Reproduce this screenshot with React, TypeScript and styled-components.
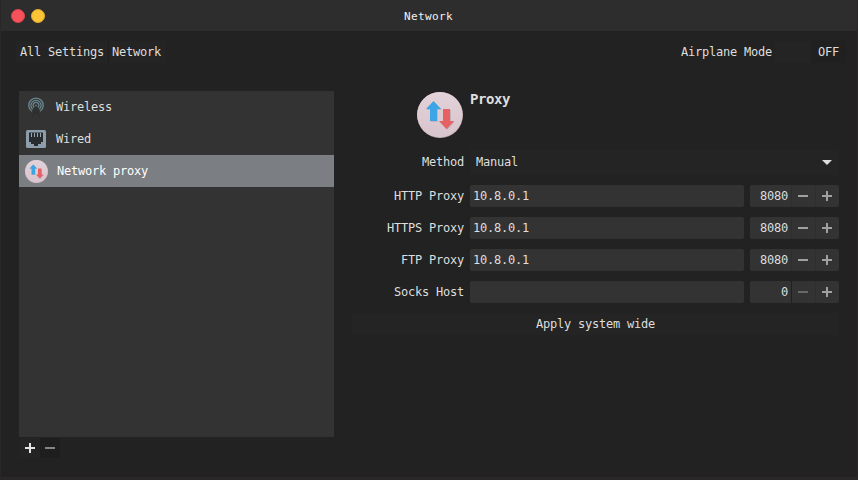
import React from "react";
import styled, { createGlobalStyle } from "styled-components";

const GlobalStyle = createGlobalStyle`
  *, *::before, *::after { box-sizing: border-box; }
  body { margin: 0; background: #292526; }
`;

const Window = styled.div`
  width: 858px;
  height: 480px;
  display: flex;
  flex-direction: column;
  border: solid #292728;
  border-width: 0 1px 3px;
  background: #222222;
  color: #dedede;
  font: 12px/16px "DejaVu Sans Mono", monospace;
  letter-spacing: -0.224px;
  white-space: pre;
  overflow: hidden;
`;

const TitleBar = styled.header`
  height: 31px;
  flex: none;
  display: grid;
  grid-template-columns: 1fr auto 1fr;
  align-items: center;
  padding: 0 11px 0 10px;
  background: #2d2d2d;
`;

const Lights = styled.div`
  display: flex;
  gap: 6px;
  padding-top: 1px;
`;

const Light = styled.span<{ $color: string; $edge: string }>`
  width: 14px;
  height: 14px;
  border-radius: 50%;
  background: ${(p) => p.$color};
  border: 1px solid ${(p) => p.$edge};
`;

const Title = styled.h1`
  margin: 0;
  color: #f2f2f2;
  font-size: 11px;
  font-weight: 400;
  letter-spacing: 0.378px;
  padding-top: 2px;
`;

const Toolbar = styled.nav`
  display: flex;
  align-items: center;
  height: 22px;
  margin: 10px 10px 0 15px;
`;

const Crumb = styled.span<{ $last?: boolean }>`
  height: 22px;
  line-height: 22px;
  padding: 0 4px 0 ${(p) => (p.$last ? "3px" : "4px")};
  background: #242424;
  border-left: ${(p) => (p.$last ? "1px solid #1e1e1e" : "none")};
`;

const Airplane = styled.span`
  margin-left: auto;
  padding-right: 3px;
`;

const Toggle = styled.span`
  display: flex;
  width: 72px;
  height: 22px;
  line-height: 22px;
  background: #202020;
`;

const ToggleKnob = styled.span`
  width: 36px;
  margin-right: 7px;
  background: #242424;
`;

const ToggleSection = styled.span`
  flex: 1;
`;

const Content = styled.main`
  display: flex;
  gap: 18px;
  padding: 28px 18px 0;
`;

const Sidebar = styled.aside`
  width: 315px;
`;

const DeviceList = styled.div`
  height: 346px;
  background: #333333;
`;

const Device = styled.div<{ $selected?: boolean }>`
  height: 32px;
  display: flex;
  align-items: center;
  padding-left: 6px;
  gap: 9px;
  background: ${(p) => (p.$selected ? "#7b7e82" : "transparent")};
  color: ${(p) => (p.$selected ? "#ffffff" : "#dedede")};
  svg {
    flex: none;
    margin-top: ${(p) => (p.$selected ? "1px" : "0")};
  }
`;

const ListActions = styled.div`
  display: flex;
  padding-left: 1px;
  padding-top: 1px;
`;

const ListAction = styled.span<{ $disabled?: boolean }>`
  width: 20px;
  height: 20px;
  display: grid;
  place-items: center;
  color: ${(p) => (p.$disabled ? "#858585" : "#e6e6e6")};
  background: ${(p) => (p.$disabled ? "#1e1e1e" : "#242424")};
`;

const Panel = styled.section`
  width: 487px;
  display: flex;
  flex-direction: column;
`;

const PanelHead = styled.div`
  height: 58px;
  display: flex;
  padding: 1px 0 0 65px;
  gap: 7px;
  svg { flex: none; }
`;

const PanelTitle = styled.h2`
  margin: 0;
  font-size: 14px;
  line-height: 14px;
  font-weight: 700;
  letter-spacing: -0.428px;
`;

const FormRow = styled.div<{ $height: number; $bottom: number }>`
  display: grid;
  grid-template-columns: 112px 1fr auto;
  column-gap: 6px;
  align-items: center;
  height: ${(p) => p.$height}px;
  margin-bottom: ${(p) => p.$bottom}px;
`;

const Label = styled.label`
  text-align: right;
`;

const Select = styled.div`
  grid-column: 2 / 4;
  height: 26px;
  display: flex;
  align-items: center;
  justify-content: space-between;
  padding: 0 7px 0 6px;
  background: #242424;
  color: #dedede;
`;

const Field = styled.div`
  height: 22px;
  line-height: 22px;
  padding-left: 3px;
  border-radius: 2px;
  background: #333333;
`;

const Spinner = styled.div`
  width: 89px;
  height: 22px;
  display: grid;
  grid-template-columns: 1fr 24px 24px;
  line-height: 22px;
  border-radius: 2px;
  background: #333333;
  overflow: hidden;
`;

const Port = styled.span`
  text-align: right;
  padding-right: 3px;
`;

const Step = styled.span<{ $disabled?: boolean }>`
  display: grid;
  place-items: center;
  padding-right: 1px;
  border-left: 1px solid ${(p) => (p.$disabled ? "#202020" : "#2e2e2e")};
  color: ${(p) => (p.$disabled ? "#686868" : "#a0a0a0")};
`;

const Apply = styled.div`
  height: 22px;
  line-height: 22px;
  text-align: center;
  background: #242424;
`;

const Minus = () => (
  <svg width="10" height="10" display="block" fill="currentColor" shapeRendering="crispEdges">
    <path d="M0 4h10v2H0z" />
  </svg>
);

const Plus = () => (
  <svg width="10" height="10" display="block" fill="currentColor" shapeRendering="crispEdges">
    <path d="M4 0h2v4h4v2H6v4H4V6H0V4h4z" />
  </svg>
);

const ProxyIcon = ({ size }: { size: number }) => (
  <svg width={size} height={size} viewBox="0 0 46 46">
    <defs>
      <linearGradient id={"disc" + size} x1="0" y1="0" x2="0" y2="1">
        <stop offset="0" stopColor="#e3d2d9" />
        <stop offset="1" stopColor="#d8c4cc" />
      </linearGradient>
    </defs>
    <circle cx="23" cy="23" r="23" fill="#c2afb6" />
    <circle cx="22.8" cy="22.7" r="22.6" fill={`url(#disc${size})`} />
    <g fill="#bdaab2" transform="translate(.7 .8)">
      <path d="M16.5 9 24 17h-4v12h-7V17H9z" />
      <path d="M26 17h7v12h4l-7.5 8-7.5-8h4z" />
    </g>
    <path fill="#3ba5e6" d="M16.5 9 24 17h-4v12h-7V17H9z" />
    <path fill="#e66064" d="M26 17h7v12h4l-7.5 8-7.5-8h4z" />
  </svg>
);

const WirelessIcon = () => (
  <svg width="22" height="22" viewBox="0 0 22 22" fill="none">
    <g stroke="#6b8790" strokeWidth="1.3">
      <path d="M6.8 15.3A7.3 7.3 0 1 1 15.2 15.3" />
      <path d="M7.6 13.2A5.1 5.1 0 1 1 14.4 13.2" />
      <path d="M9.2 11.5A2.9 2.9 0 1 1 12.8 11.5" />
    </g>
    <circle cx="11" cy="9.4" r="1" fill="#56717b" />
    <path d="M11 11 7.5 21M11 11l3.5 10M9.2 15l4.6 4M12.8 15l-4.6 4" stroke="#292c2d" strokeWidth="0.9" />
  </svg>
);

const WiredIcon = () => (
  <svg width="22" height="22" viewBox="0 0 22 22">
    <rect x="1" y="2" width="20" height="18" rx="1.5" fill="#8d9dab" />
    <path fill="#292c2e" d="M4 4.5h14V14h-2v2h-3v2H9v-2H6v-2H4z" />
    <path stroke="#9aa8b5" d="M6.5 5v4M9.5 5v4M12.5 5v4M15.5 5v4" />
  </svg>
);

const rows = [
  { label: "HTTP Proxy", host: "10.8.0.1", port: 8080 },
  { label: "HTTPS Proxy", host: "10.8.0.1", port: 8080 },
  { label: "FTP Proxy", host: "10.8.0.1", port: 8080 },
  { label: "Socks Host", host: "", port: 0 },
];

export default function App() {
  return (
    <>
      <GlobalStyle />
      <Window>
        <TitleBar>
          <Lights>
            <Light $color="#f6525b" $edge="#dc434d" />
            <Light $color="#fdc436" $edge="#e2ad2f" />
          </Lights>
          <Title>Network</Title>
        </TitleBar>
        <Toolbar>
          <Crumb>All Settings</Crumb>
          <Crumb $last>Network</Crumb>
          <Airplane>Airplane Mode</Airplane>
          <Toggle>
            <ToggleKnob />
            <ToggleSection>OFF</ToggleSection>
          </Toggle>
        </Toolbar>
        <Content>
          <Sidebar>
            <DeviceList>
              <Device><WirelessIcon />Wireless</Device>
              <Device><WiredIcon />Wired</Device>
              <Device $selected><ProxyIcon size={23} />Network proxy</Device>
            </DeviceList>
            <ListActions>
              <ListAction><Plus /></ListAction>
              <ListAction $disabled><Minus /></ListAction>
            </ListActions>
          </Sidebar>
          <Panel>
            <PanelHead>
              <ProxyIcon size={46} />
              <PanelTitle>Proxy</PanelTitle>
            </PanelHead>
            <FormRow $height={26} $bottom={10}>
              <Label>Method</Label>
              <Select>
                Manual
                <svg width="10" height="5" fill="currentColor"><path d="M0 0h10L5 5z" /></svg>
              </Select>
            </FormRow>
            {rows.map((r) => (
              <FormRow key={r.label} $height={22} $bottom={10}>
                <Label>{r.label}</Label>
                <Field>{r.host}</Field>
                <Spinner>
                  <Port>{r.port}</Port>
                  <Step $disabled={r.port === 0}><Minus /></Step>
                  <Step><Plus /></Step>
                </Spinner>
              </FormRow>
            ))}
            <Apply>Apply system wide</Apply>
          </Panel>
        </Content>
      </Window>
    </>
  );
}
